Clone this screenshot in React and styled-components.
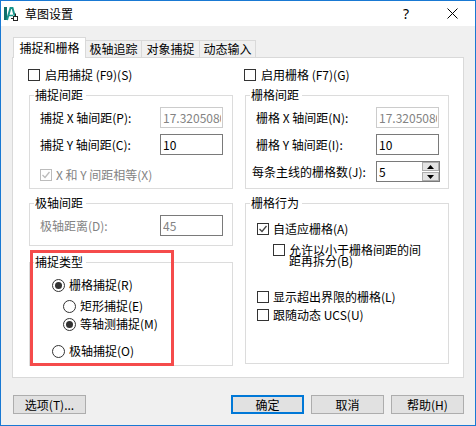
import React from 'react';
import styled, { createGlobalStyle } from 'styled-components';

const GlobalStyle = createGlobalStyle`
  html, body {
    margin: 0;
    padding: 0;
    background: #fff;
  }
  body {
    font-family: "Noto Sans CJK SC", "Noto Sans", sans-serif;
    font-size: 12px;
    color: #000;
  }
  * {
    box-sizing: border-box;
  }
`;

const Window = styled.div`
  width: 476px;
  height: 426px;
  border: 1px solid #1979d3;
  background: #f0f0f0;
  display: flex;
  flex-direction: column;
`;

const TitleBar = styled.div`
  height: 25px;
  flex-shrink: 0;
  background: #fff;
  display: flex;
  align-items: center;
  padding-left: 3px;
`;

const TitleText = styled.span`
  margin-left: 7px;
  line-height: 14px;
  flex: 1;
`;

const TitleButton = styled.div`
  width: 46px;
  height: 25px;
  display: flex;
  align-items: center;
  justify-content: center;
  font-family: "Noto Sans", sans-serif;
  font-size: 14px;
`;

const Body = styled.div`
  flex: 1;
  display: flex;
  flex-direction: column;
  padding: 11px 11px 0 11px;
`;

const TabBar = styled.div`
  display: flex;
  align-items: flex-end;
  height: 20px;
  padding-left: 1px;
`;

const Tab = styled.div`
  width: ${p => p.$w}px;
  height: ${p => (p.$active ? 21 : 17)}px;
  margin-bottom: ${p => (p.$active ? -1 : 0)}px;
  border: 1px solid #d9d9d9;
  border-bottom: none;
  border-left: ${p => (p.$active ? '1px solid #d9d9d9' : 'none')};
  background: ${p => (p.$active ? '#fff' : '#f0f0f0')};
  display: flex;
  align-items: center;
  justify-content: center;
  line-height: 14px;
  position: relative;
  z-index: ${p => (p.$active ? 1 : 0)};
`;

const Panel = styled.div`
  height: 321px;
  border: 1px solid #d9d9d9;
  background: #fff;
  display: flex;
  gap: 11px;
  padding: 11px 14px 0 15px;
`;

const Column = styled.div`
  width: 205px;
  display: flex;
  flex-direction: column;
`;

const Group = styled.div`
  margin-left: 1px;
  margin-top: ${p => p.$mt || 0}px;
  width: 204px;
  height: ${p => p.$h}px;
  border: 1px solid #dcdcdc;
  padding-left: ${p => p.$pad}px;
  display: flex;
  flex-direction: column;
  align-items: flex-start;
`;

const Legend = styled.div`
  margin: -8px 0 0 ${p => 4 - p.$pad}px;
  padding: 0 3px 0 1px;
  height: 14px;
  line-height: 14px;
  background: #fff;
`;

const HighlightWrap = styled.div`
  position: relative;
  margin-top: ${p => p.$mt}px;
`;

const Highlight = styled.div`
  position: absolute;
  left: 2px;
  top: -12px;
  width: 144px;
  height: 116px;
  border: 3px solid #f54b4b;
  pointer-events: none;
`;

const FieldRow = styled.div`
  display: grid;
  grid-template-columns: 120px auto;
  align-items: center;
  height: 21px;
  margin-top: ${p => p.$mt}px;
`;

const FieldLabel = styled.span`
  line-height: 14px;
  white-space: nowrap;
  margin-left: ${p => p.$shift || 0}px;
  color: ${p => (p.$disabled ? '#838383' : '#000')};
`;

const TextInput = styled.input`
  width: 63px;
  height: 21px;
  border: 1px solid ${p => (p.$dim ? '#cccccc' : '#7a7a7a')};
  background: #fff;
  padding: 0 1px 0 2px;
  font-family: "Noto Sans CJK SC", sans-serif;
  font-size: 12px;
  color: ${p => (p.$muted ? '#838383' : '#000')};
  outline: none;
`;

const Spinner = styled.div`
  width: 64px;
  height: 21px;
  border: 1px solid #7a7a7a;
  background: #fff;
  display: flex;
`;

const SpinInput = styled.input`
  flex: 1;
  min-width: 0;
  border: none;
  padding: 0 0 0 2px;
  font-family: "Noto Sans CJK SC", sans-serif;
  font-size: 12px;
  outline: none;
`;

const SpinButtons = styled.div`
  width: 17px;
  display: flex;
  flex-direction: column;
  gap: 1px;
`;

const SpinButton = styled.div`
  flex: 1;
  background: #e3e3e3;
  border: 1px solid #adadad;
  display: flex;
  align-items: center;
  justify-content: center;
`;

const CheckRow = styled.div`
  display: flex;
  align-items: ${p => (p.$top ? 'flex-start' : 'center')};
  gap: ${p => p.$gap || 4}px;
  margin-top: ${p => p.$mt || 0}px;
  margin-left: ${p => p.$ml || 0}px;
`;

const Box = styled.span`
  width: 12px;
  height: 12px;
  flex-shrink: 0;
  border: 1px solid ${p => (p.$disabled ? '#bcbcbc' : '#333')};
  background: #fff;
  display: flex;
  align-items: center;
  justify-content: center;
`;

const CheckText = styled.span`
  line-height: ${p => p.$lh || 12}px;
  width: ${p => (p.$w ? `${p.$w}px` : 'auto')};
  white-space: ${p => (p.$w ? 'normal' : 'nowrap')};
  color: ${p => (p.$disabled ? '#838383' : '#000')};
`;

const RadioRow = styled.div`
  display: flex;
  align-items: center;
  gap: 4px;
  height: 18px;
  margin-top: ${p => p.$mt}px;
  margin-left: ${p => p.$ml || 0}px;
`;

const RadioCircle = styled.span`
  width: 13px;
  height: 13px;
  flex-shrink: 0;
  border-radius: 50%;
  border: 1px solid #333;
  background: #fff;
  display: flex;
  align-items: center;
  justify-content: center;

  &::after {
    content: '';
    display: ${p => (p.$on ? 'block' : 'none')};
    width: 7px;
    height: 7px;
    border-radius: 50%;
    background: #333;
  }
`;

const RadioText = styled.span`
  line-height: 14px;
`;

const ButtonRow = styled.div`
  display: flex;
  justify-content: space-between;
  margin-top: 17px;
`;

const ButtonGroup = styled.div`
  display: flex;
  gap: 7px;
`;

const Button = styled.button`
  width: 73px;
  height: 19px;
  margin-left: ${p => p.$ml || 0}px;
  padding: 0;
  border: ${p => (p.$default ? '2px solid #0078d7' : '1px solid #adadad')};
  background: #e1e1e1;
  font-family: "Noto Sans CJK SC", sans-serif;
  font-size: 12px;
  line-height: 14px;
  color: #000;
`;

const AppIcon = () => (
  <svg width="14" height="14" viewBox="0 0 14 14">
    <rect x="0" y="0" width="3" height="13" fill="#0f6f6a" />
    <path d="M3 13 L6.5 1 H8.5 L11 10" stroke="#17948a" strokeWidth="2" fill="none" />
    <path d="M5 8.5 H9" stroke="#17948a" strokeWidth="1.5" />
    <rect x="9.5" y="9.5" width="4" height="4" fill="#fff" stroke="#222" strokeWidth="1" />
    <path d="M11.5 6.5 V9.5 M7 11.5 H9.5" stroke="#222" strokeWidth="1" />
  </svg>
);

const CloseIcon = () => (
  <svg width="11" height="11" viewBox="0 0 11 11">
    <path d="M0.5 0.5 L10.5 10.5 M10.5 0.5 L0.5 10.5" stroke="#000" strokeWidth="1" />
  </svg>
);

const Tick = ({ color }) => (
  <svg width="10" height="10" viewBox="0 0 10 10">
    <path d="M1.5 5 L4 7.5 L8.5 2" stroke={color} strokeWidth="1.3" fill="none" />
  </svg>
);

const Arrow = ({ up }) => (
  <svg width="7" height="4" viewBox="0 0 7 4">
    <path d={up ? 'M0 4 L3.5 0 L7 4 Z' : 'M0 0 L3.5 4 L7 0 Z'} fill="#000" />
  </svg>
);

const Checkbox = ({ checked, disabled, children, ...rest }) => (
  <CheckRow {...rest}>
    <Box $disabled={disabled}>{checked && <Tick color={disabled ? '#bcbcbc' : '#444'} />}</Box>
    {children}
  </CheckRow>
);

const Radio = ({ on, label, mt, ml }) => (
  <RadioRow $mt={mt} $ml={ml}>
    <RadioCircle $on={on} />
    <RadioText>{label}</RadioText>
  </RadioRow>
);

const tabs = [
  { label: '捕捉和栅格', w: 73, active: true },
  { label: '极轴追踪', w: 56 },
  { label: '对象捕捉', w: 58 },
  { label: '动态输入', w: 56 },
];

export default function App() {
  return (
    <>
      <GlobalStyle />
      <Window>
        <TitleBar>
          <AppIcon />
          <TitleText>草图设置</TitleText>
          <TitleButton>?</TitleButton>
          <TitleButton>
            <CloseIcon />
          </TitleButton>
        </TitleBar>

        <Body>
          <TabBar>
            {tabs.map(t => (
              <Tab key={t.label} $w={t.w} $active={t.active}>
                {t.label}
              </Tab>
            ))}
          </TabBar>

          <Panel>
            <Column>
              <Checkbox $gap={5}>
                <CheckText>启用捕捉 (F9)(S)</CheckText>
              </Checkbox>

              <Group $mt={14} $h={94} $pad={10}>
                <Legend $pad={10}>捕捉间距</Legend>
                <FieldRow $mt={5}>
                  <FieldLabel>捕捉 X 轴间距(P):</FieldLabel>
                  <TextInput $dim $muted disabled defaultValue="17.3205080" />
                </FieldRow>
                <FieldRow $mt={6}>
                  <FieldLabel>捕捉 Y 轴间距(C):</FieldLabel>
                  <TextInput defaultValue="10" />
                </FieldRow>
                <Checkbox checked disabled $mt={14}>
                  <CheckText $disabled>X 和 Y 间距相等(X)</CheckText>
                </Checkbox>
              </Group>

              <Group $mt={14} $h={43} $pad={10}>
                <Legend $pad={10}>极轴间距</Legend>
                <FieldRow $mt={5}>
                  <FieldLabel $disabled>极轴距离(D):</FieldLabel>
                  <TextInput $muted readOnly defaultValue="45" />
                </FieldRow>
              </Group>

              <HighlightWrap $mt={16}>
                <Group $h={104} $pad={22}>
                  <Legend $pad={22}>捕捉类型</Legend>
                  <Radio on label="栅格捕捉(R)" mt={7} />
                  <Radio label="矩形捕捉(E)" mt={3} ml={11} />
                  <Radio on label="等轴测捕捉(M)" mt={0} ml={11} />
                  <Radio label="极轴捕捉(O)" mt={9} />
                </Group>
                <Highlight />
              </HighlightWrap>
            </Column>

            <Column>
              <Checkbox $gap={5}>
                <CheckText>启用栅格 (F7)(G)</CheckText>
              </Checkbox>

              <Group $mt={14} $h={94} $pad={10}>
                <Legend $pad={10}>栅格间距</Legend>
                <FieldRow $mt={5}>
                  <FieldLabel>栅格 X 轴间距(N):</FieldLabel>
                  <TextInput $dim $muted disabled defaultValue="17.3205080" />
                </FieldRow>
                <FieldRow $mt={6}>
                  <FieldLabel>栅格 Y 轴间距(I):</FieldLabel>
                  <TextInput defaultValue="10" />
                </FieldRow>
                <FieldRow $mt={6}>
                  <FieldLabel $shift={-4}>每条主线的栅格数(J):</FieldLabel>
                  <Spinner>
                    <SpinInput defaultValue="5" />
                    <SpinButtons>
                      <SpinButton>
                        <Arrow up />
                      </SpinButton>
                      <SpinButton>
                        <Arrow />
                      </SpinButton>
                    </SpinButtons>
                  </Spinner>
                </FieldRow>
              </Group>

              <Group $mt={14} $h={161} $pad={11}>
                <Legend $pad={11}>栅格行为</Legend>
                <Checkbox checked $mt={13}>
                  <CheckText>自适应栅格(A)</CheckText>
                </Checkbox>
                <Checkbox $top $mt={9} $ml={16}>
                  <CheckText $lh={11} $w={134}>
                    允许以小于栅格间距的间距再拆分(B)
                  </CheckText>
                </Checkbox>
                <Checkbox $mt={25}>
                  <CheckText>显示超出界限的栅格(L)</CheckText>
                </Checkbox>
                <Checkbox $mt={6}>
                  <CheckText>跟随动态 UCS(U)</CheckText>
                </Checkbox>
              </Group>
            </Column>
          </Panel>

          <ButtonRow>
            <Button $ml={1}>选项(T)...</Button>
            <ButtonGroup>
              <Button $default>确定</Button>
              <Button>取消</Button>
              <Button>帮助(H)</Button>
            </ButtonGroup>
          </ButtonRow>
        </Body>
      </Window>
    </>
  );
}
